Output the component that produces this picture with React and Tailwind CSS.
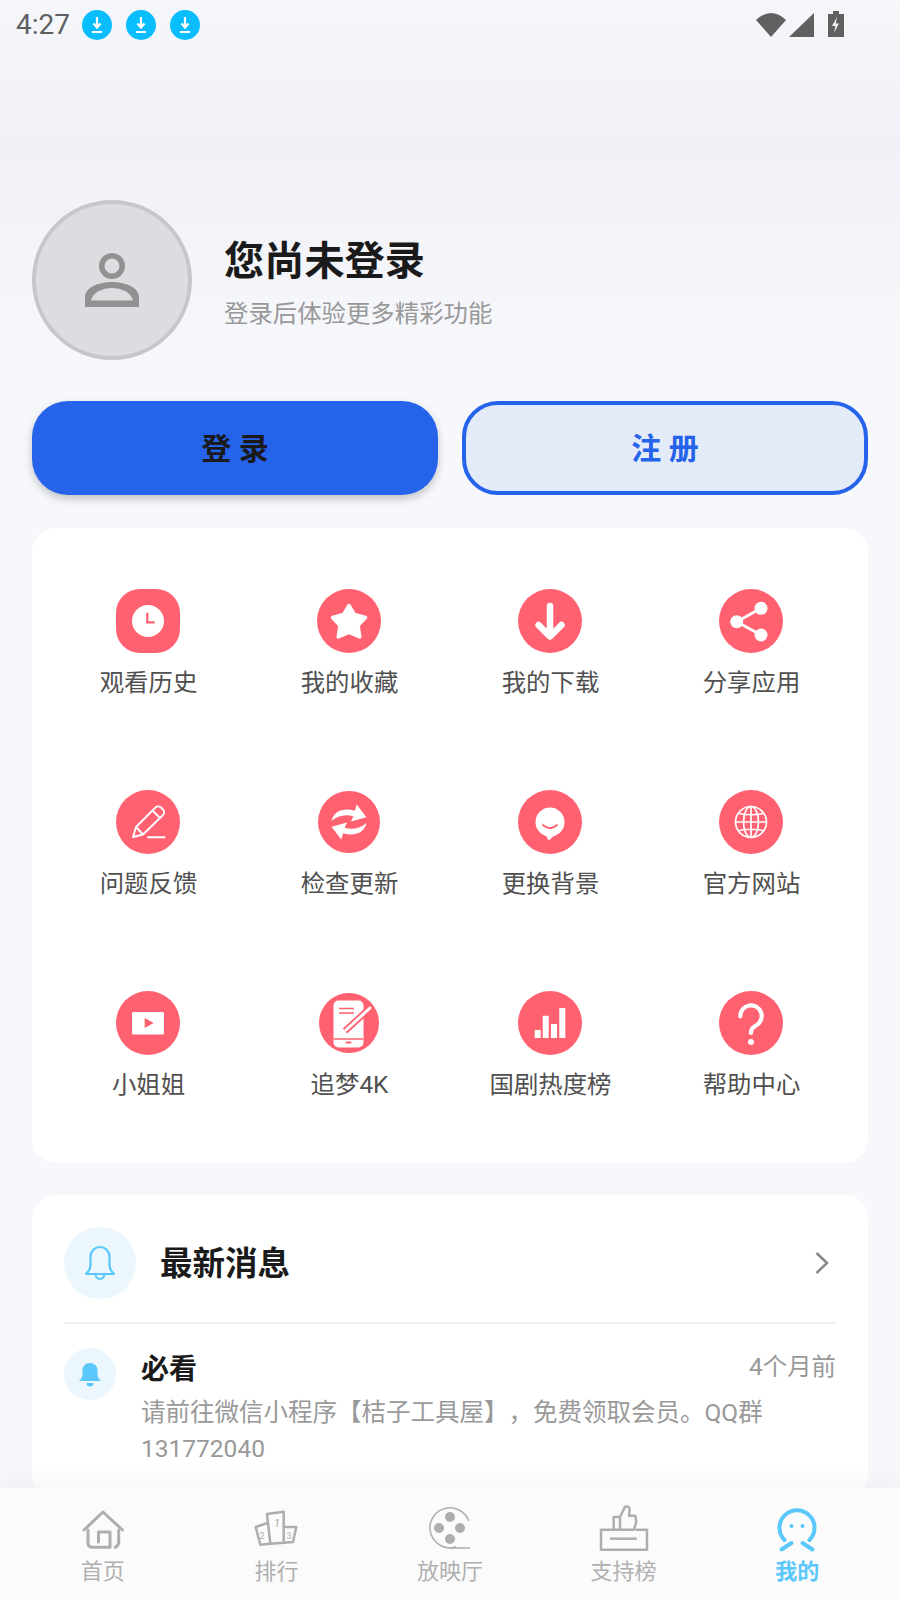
import React from "react";

const cjk = "font-['Roboto','Noto_Sans_CJK_SC',sans-serif] [text-spacing-trim:space-all]";

// white glyphs on the pink round tiles, all drawn in a 64x64 box
const Tile = ({ children, square = false }) => (
  <svg viewBox="0 0 64 64" className="w-16 h-16 shrink-0">
    {square ? (
      <rect width="64" height="64" rx="24" fill="#ff6170" />
    ) : (
      <circle cx="32" cy="32" r="32" fill="#ff6170" />
    )}
    {children}
  </svg>
);

const menuIcons = {
  history: (
    <Tile square>
      <circle cx="32" cy="32" r="16" fill="#fff" />
      <path d="M31.3 23.7V33.3H38.7" fill="none" stroke="#ff6170" strokeWidth="2.2" />
    </Tile>
  ),
  star: (
    <Tile>
      <polygon
        points="32,16.5 37.3,25.5 48.5,28.5 41,36.5 42.8,48 32,43.5 21.2,48 23,36.5 15.5,28.5 26.7,25.5"
        fill="#fff"
        stroke="#fff"
        strokeWidth="3.5"
        strokeLinejoin="round"
      />
    </Tile>
  ),
  download: (
    <Tile>
      <path
        d="M32 17V46M20.500 36L32 47.500L43.500 36"
        fill="none"
        stroke="#fff"
        strokeWidth="6.500"
        strokeLinecap="round"
        strokeLinejoin="round"
      />
    </Tile>
  ),
  share: (
    <Tile>
      <path d="M42 19.3L17.7 32.7L42 46" fill="none" stroke="#fff" strokeWidth="2.8" />
      <circle cx="42" cy="19.3" r="6.5" fill="#fff" />
      <circle cx="17.7" cy="32.7" r="6.5" fill="#fff" />
      <circle cx="42" cy="46" r="6.5" fill="#fff" />
    </Tile>
  ),
  edit: (
    <Tile>
      <path
        d="M17 47L20 37L39.5 17.5a4 4 0 0 1 5.5 0L47 19.5a4 4 0 0 1 0 5.5L27 44.5ZM20 37L27 44.5M36.5 20.5L44 28"
        fill="none"
        stroke="#fff"
        strokeWidth="1.9"
        strokeLinejoin="round"
      />
      <path d="M32 47.3H48.5" stroke="#fff" strokeWidth="2" strokeLinecap="round" />
    </Tile>
  ),
  refresh: (
    <svg viewBox="0 0 64 64" className="w-[62px] h-[62px] shrink-0">
      <circle cx="32" cy="32" r="32" fill="#ff6170" />
      <path d="M14 31C16 20 28 17 38 20.500L40 14L50 27L34 31.500L36.500 26C28 23.500 20 25.500 14 31Z" fill="#fff" />
      <path d="M14 31C16 20 28 17 38 20.500L40 14L50 27L34 31.500L36.500 26C28 23.500 20 25.500 14 31Z" fill="#fff" transform="rotate(180 32 32)" />
    </svg>
  ),
  skin: (
    <Tile>
      <circle cx="32" cy="32" r="14.5" fill="#fff" />
      <polygon points="27,44 30.700,50.500 38,44" fill="#fff" />
      <path d="M25 35Q32 41.500 39 35" fill="none" stroke="#ff6170" strokeWidth="1.8" strokeLinecap="round" />
    </Tile>
  ),
  globe: (
    <Tile>
      <g fill="none" stroke="#fff" strokeWidth="1.7">
        <circle cx="32" cy="32" r="15.500" />
        <ellipse cx="32" cy="32" rx="7.500" ry="15.500" />
        <path d="M32 16.500V47.500M17 32H47M20 23.500Q32 26 44 23.500M20 40.500Q32 38 44 40.500" />
      </g>
    </Tile>
  ),
  video: (
    <Tile>
      <rect x="16" y="21" width="32" height="22.500" rx="1.500" fill="#fff" />
      <polygon points="28.700,27 37.700,32 28.700,37" fill="#ff6170" />
    </Tile>
  ),
  phone: (
    <svg viewBox="0 0 60 60" className="w-[60px] h-[60px] shrink-0">
      <circle cx="30" cy="30" r="30" fill="#ff6170" />
      <rect x="14.500" y="7.500" width="30" height="47" rx="5" fill="#fff" />
      <path d="M20 15.500H35M20 20H35M14.500 46H44.500" stroke="#ff6170" strokeWidth="1.300" />
      <rect x="26.500" y="48.500" width="6" height="2" rx="1" fill="#ff6170" />
      <path d="M26 38L50 16" stroke="#ff6170" strokeWidth="6.500" />
      <path d="M27 37L51 15" stroke="#fff" strokeWidth="3" strokeLinecap="round" />
    </svg>
  ),
  bars: (
    <Tile>
      <path d="M16.700 39h6v8h-6zM24.700 24.700h6V47h-6zM33 33h6v14h-6zM41.300 17h6v30h-6z" fill="#fff" />
    </Tile>
  ),
  help: (
    <Tile>
      <path
        d="M21.300 25.300A10.700 10.700 0 1 1 37 34.500C33.500 36.800 32 38 32 42"
        fill="none"
        stroke="#fff"
        strokeWidth="4.200"
        strokeLinecap="round"
      />
      <circle cx="32" cy="51" r="3" fill="#fff" />
    </Tile>
  ),
};

const menus = [
  { label: "观看历史", icon: "history" },
  { label: "我的收藏", icon: "star" },
  { label: "我的下载", icon: "download" },
  { label: "分享应用", icon: "share" },
  { label: "问题反馈", icon: "edit" },
  { label: "检查更新", icon: "refresh" },
  { label: "更换背景", icon: "skin" },
  { label: "官方网站", icon: "globe" },
  { label: "小姐姐", icon: "video" },
  { label: "追梦4K", icon: "phone" },
  { label: "国剧热度榜", icon: "bars" },
  { label: "帮助中心", icon: "help" },
];

const DownloadBadge = () => (
  <svg viewBox="0 0 30 30" className="w-[30px] h-[30px]">
    <circle cx="15" cy="15" r="15" fill="#0abdfd" />
    <path
      d="M15 7V17M11.500 13.500L15 17.500L18.500 13.500M10 22H20"
      fill="none"
      stroke="#fff"
      strokeWidth="2.200"
    />
  </svg>
);

const StatusBar = () => (
  <div className="h-12 pt-[2px] flex items-center pl-4 pr-[56px]">
    <span className="text-[28px] leading-none text-[#5f6062] font-['Roboto',sans-serif] mr-[12px]">4:27</span>
    <div className="flex gap-[14px]">
      <DownloadBadge />
      <DownloadBadge />
      <DownloadBadge />
    </div>
    <div className="flex-1" />
    <svg viewBox="0 0 88 28" className="w-[88px] h-[28px]" fill="#606060">
      <path d="M0 9Q15 -5 30 9L15 26Z" />
      <path d="M33 26L58 2V26Z" />
      <path d="M77 0h6v3h5v23H72V3h5Z" />
      <path d="M81 6L76 15H79.500L78 22L83 12.500H79.800Z" fill="#eef0f5" />
    </svg>
  </div>
);

const HomeIcon = () => (
  <svg viewBox="0 0 52 52" className="w-[52px] h-[52px]" fill="none" stroke="#aeaeae" strokeWidth="3" strokeLinejoin="round" strokeLinecap="round">
    <path d="M7 28L26 10L45.500 28" />
    <path d="M11 28V41Q11 45.300 15.600 45.300H33V30H21.500V40" />
    <path d="M41.700 28V40Q41.700 44 38 45.300" />
  </svg>
);

const RankIcon = () => (
  <svg viewBox="0 0 52 52" className="w-[52px] h-[52px]" fill="none" stroke="#aeaeae" strokeWidth="2.500" strokeLinejoin="round">
    <path d="M17 12L33.700 9.700V40.700L20.300 41.700Z" />
    <path d="M17.500 21L5.700 25L10.300 42.700L20.300 41.700" />
    <path d="M33.700 25H46.300L43 40L33.700 40.700" />
    <text x="24" y="25" fontSize="11" fill="#aeaeae" stroke="none" fontFamily="Roboto, sans-serif" fontStyle="italic">1</text>
    <text x="9.500" y="37" fontSize="9" fill="#aeaeae" stroke="none" fontFamily="Roboto, sans-serif">2</text>
    <text x="36.500" y="37" fontSize="9" fill="#aeaeae" stroke="none" fontFamily="Roboto, sans-serif">3</text>
  </svg>
);

const FilmIcon = () => (
  <svg viewBox="0 0 52 52" className="w-[52px] h-[52px]" fill="#aeaeae">
    <path d="M25.500 46A20 20 0 1 1 46 26" fill="none" stroke="#aeaeae" strokeWidth="1.500" transform="rotate(-20 25.500 26)" />
    <path d="M25.500 46H46" fill="none" stroke="#aeaeae" strokeWidth="1.500" />
    <circle cx="26" cy="15" r="5" />
    <circle cx="15" cy="26" r="5" />
    <circle cx="36" cy="26" r="5" />
    <circle cx="26" cy="37" r="5" />
  </svg>
);

const ThumbIcon = () => (
  <svg viewBox="0 0 52 52" className="w-[52px] h-[52px]" fill="none" stroke="#aeaeae" strokeWidth="2.500" strokeLinejoin="round">
    <path d="M15 27.700H3V47.700H49V27.700H37.500" />
    <path d="M12 36.700H38.700" />
    <path d="M15.700 27.700V15H22L27 4.800Q31.500 3.500 31.700 8L31 13.700H37.300L38.300 20L36 27.700ZM22 15V27.700" />
  </svg>
);

const MineIcon = () => (
  <svg viewBox="0 0 52 52" className="w-[52px] h-[52px]" fill="none" stroke="#5ac8fa" strokeWidth="4" strokeLinecap="round">
    <path d="M13.500 38A17.500 17.500 0 1 1 38.500 38" />
    <path d="M20.500 41L10.500 47.500M31.500 41L41.500 47.500" />
    <circle cx="20.500" cy="24" r="2" fill="#5ac8fa" stroke="none" />
    <circle cx="31.500" cy="24" r="2" fill="#5ac8fa" stroke="none" />
  </svg>
);

const tabs = [
  { label: "首页", icon: <HomeIcon /> },
  { label: "排行", icon: <RankIcon /> },
  { label: "放映厅", icon: <FilmIcon /> },
  { label: "支持榜", icon: <ThumbIcon /> },
  { label: "我的", icon: <MineIcon />, active: true },
];

const App = () => {
  return (
    <div className={`relative w-[900px] h-[1600px] overflow-hidden flex flex-col bg-[#f6f8fc] ${cjk}`}>
      <div className="flex-1 min-h-0 overflow-hidden">
        {/* Top area */}
        <div className="bg-gradient-to-b from-[#f6f7fb] via-[#f0f1f6] via-40% to-[#f6f8fc]">
          <StatusBar />

          {/* Profile */}
          <div className="mt-[152px] mx-8 flex items-center">
            <div className="w-40 h-40 rounded-full bg-[#dcdde1] border-4 border-[#c6c7ca] flex items-center justify-center">
              <svg viewBox="0 0 54 54" className="w-[54px] h-[54px]" fill="#919191">
                <path
                  fillRule="evenodd"
                  d="M27 0a13 13 0 1 1 0 26a13 13 0 0 1 0 -26ZM27 5.500a7.500 7.500 0 1 0 0 15a7.500 7.500 0 0 0 0 -15ZM0 54V44C0 34 15 29 27 29C39 29 54 34 54 44V54ZM6 47.500H48C46 38 34 35 27 35C20 35 8 38 6 47.500Z"
                />
              </svg>
            </div>
            <div className="ml-8 mt-[7px] flex flex-col">
              <div className="text-[40.200px] leading-[52px] font-bold text-[#1a1a1a]">您尚未登录</div>
              <div className="text-[24.400px] leading-9 text-[#999999] mt-2">登录后体验更多精彩功能</div>
            </div>
          </div>
        </div>

        {/* Login buttons */}
        <div className="mt-[41px] mx-8 grid grid-cols-2 gap-6">
          <button className="h-[94px] rounded-[36px] bg-[#2563eb] text-[#1a1a1a] text-[30px] font-bold shadow-[0_4px_8px_rgba(0,0,0,0.22)]">
            登 录
          </button>
          <button className="h-[94px] rounded-[36px] bg-[#e4ebf8] border-4 border-[#2563eb] text-[#2563eb] text-[30px] font-bold">
            注 册
          </button>
        </div>

        {/* Menu grid */}
        <div className="mt-[33px] mx-8 p-4 bg-white rounded-3xl grid grid-cols-4">
          {menus.map((item) => (
            <div key={item.label} className="h-[201px] pt-[45px] flex flex-col items-center">
              <div className="h-16 pr-[1px] flex items-center justify-center">{menuIcons[item.icon]}</div>
              <div className="mt-3 text-[24.400px] leading-9 text-[#505050]">{item.label}</div>
            </div>
          ))}
        </div>

        {/* Messages */}
        <div className="mt-8 mx-8 h-[304px] px-8 bg-white rounded-3xl">
          <div className="pt-8 pb-[23px] flex items-center border-b-2 border-[#f0f0f3]">
            <div className="w-[72px] h-[72px] rounded-full bg-[#ebf7fd] flex items-center justify-center">
              <svg viewBox="0 0 32 36" className="w-8 h-9" fill="none" stroke="#5ac8fa" strokeWidth="2.200" strokeLinejoin="round">
                <path d="M2 29Q6.500 25 6.500 20V12C6.500 6 11 2 16 2C21 2 25.500 6 25.500 12V20Q25.500 25 30 29Z" />
                <path d="M11.500 29A4.500 5 0 0 0 20.500 29" />
              </svg>
            </div>
            <div className="ml-[24px] mt-[2px] flex-1 text-[32.500px] leading-none font-bold text-[#1a1a1a]">最新消息</div>
            <svg viewBox="0 0 14 22" className="w-[14px] h-[22px] mr-[7px]" fill="none" stroke="#888888" strokeWidth="2.500">
              <path d="M1.500 1L12 11L1.500 21" />
            </svg>
          </div>
          <div className="mt-6 flex">
            <div className="w-[52px] h-[52px] shrink-0 rounded-full bg-[#ebf7fd] flex items-center justify-center">
              <svg viewBox="0 0 24 26" className="w-6 h-[26px]" fill="#5ac8fa">
                <path d="M1 20Q4.500 17 4.500 13V9C4.500 5 8 2 12 2C16 2 19.500 5 19.500 9V13Q19.500 17 23 20Z" />
                <path d="M8.500 22H15.500A3.500 3.500 0 0 1 8.500 22Z" />
              </svg>
            </div>
            <div className="ml-[25px] flex-1 pt-1">
              <div className="flex items-start justify-between">
                <div className="text-[28px] leading-9 font-bold text-[#1a1a1a]">必看</div>
                <div className="text-[24.400px] leading-[30px] text-[#999999]">4个月前</div>
              </div>
              <div className="mt-[7px] text-[24.500px] leading-9 text-[#999999]">
                请前往微信小程序【桔子工具屋】，免费领取会员。QQ群
                <br />
                131772040
              </div>
            </div>
          </div>
        </div>
      </div>

      {/* Bottom tabs */}
      <div className="relative h-[112px] shrink-0 px-4 grid grid-cols-5 bg-[#fbfbfc] shadow-[0_-10px_20px_rgba(0,0,0,0.03)]">
        {tabs.map((tab) => (
          <div key={tab.label} className="pt-[14px] flex flex-col items-center">
            {tab.icon}
            <div
              className={
                tab.active
                  ? "mt-[4px] text-[22px] leading-7 font-bold text-[#5ac8fa]"
                  : "mt-[4px] text-[22px] leading-7 text-[#b0b0b0]"
              }
            >
              {tab.label}
            </div>
          </div>
        ))}
      </div>
    </div>
  );
};

export default App;
